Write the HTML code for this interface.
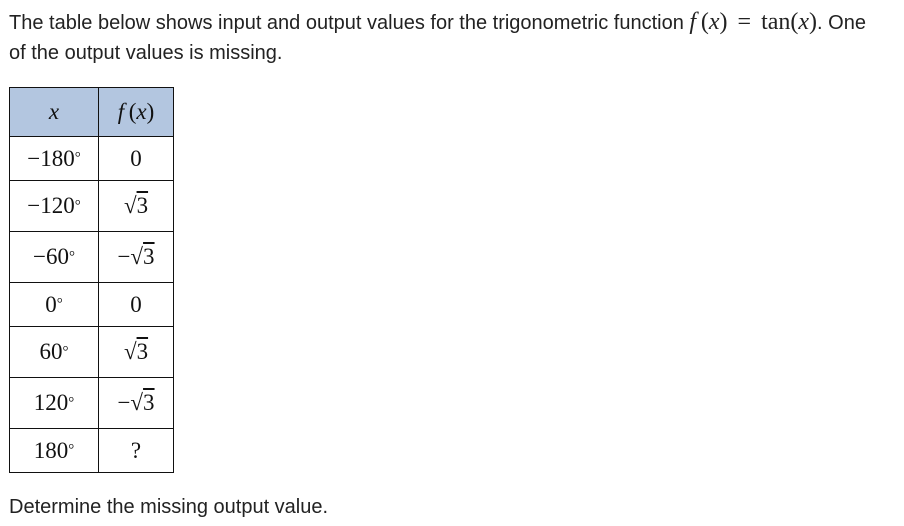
<!DOCTYPE html><html><head><style>
body{margin:0;width:904px;height:526px;background:#fff;position:relative;font-family:"Liberation Sans",sans-serif;color:#222;}
.t{position:absolute;left:9px;font-size:20px;line-height:30px;}
.c{position:absolute;border:1px solid #111;box-sizing:border-box;display:flex;align-items:center;justify-content:center;font-family:"Liberation Serif",serif;font-size:23px;color:#111;}
.m{font-family:"Liberation Serif",serif;font-size:24px;}
.s{text-decoration:overline;}
sup{font-size:15px;vertical-align:6px;}
</style></head><body>
<div class="t" style="top:7px">The table below shows input and output values for the trigonometric function <span class="m"><i>f</i>&thinsp;(<i>x</i>)<span style="margin:0 10px">=</span>tan(<i>x</i>)</span>. One<br>of the output values is missing.</div>
<div class="c" style="left:9px;top:87px;width:90px;height:50px;background:#b3c6e0"><i>x</i></div>
<div class="c" style="left:98px;top:87px;width:76px;height:50px;background:#b3c6e0"><i>f</i>&thinsp;(<i>x</i>)</div>
<div class="c" style="left:9px;top:136px;width:90px;height:45px">−180<sup>°</sup></div><div class="c" style="left:98px;top:136px;width:76px;height:45px">0</div>
<div class="c" style="left:9px;top:180px;width:90px;height:52px">−120<sup>°</sup></div><div class="c" style="left:98px;top:180px;width:76px;height:52px">√<span class="s">3</span></div>
<div class="c" style="left:9px;top:231px;width:90px;height:52px">−60<sup>°</sup></div><div class="c" style="left:98px;top:231px;width:76px;height:52px">−√<span class="s">3</span></div>
<div class="c" style="left:9px;top:282px;width:90px;height:45px">0<sup>°</sup></div><div class="c" style="left:98px;top:282px;width:76px;height:45px">0</div>
<div class="c" style="left:9px;top:326px;width:90px;height:52px">60<sup>°</sup></div><div class="c" style="left:98px;top:326px;width:76px;height:52px">√<span class="s">3</span></div>
<div class="c" style="left:9px;top:377px;width:90px;height:52px">120<sup>°</sup></div><div class="c" style="left:98px;top:377px;width:76px;height:52px">−√<span class="s">3</span></div>
<div class="c" style="left:9px;top:428px;width:90px;height:45px">180<sup>°</sup></div><div class="c" style="left:98px;top:428px;width:76px;height:45px">?</div>
<div class="t" style="top:492px">Determine the missing output value.</div>
</body></html>
